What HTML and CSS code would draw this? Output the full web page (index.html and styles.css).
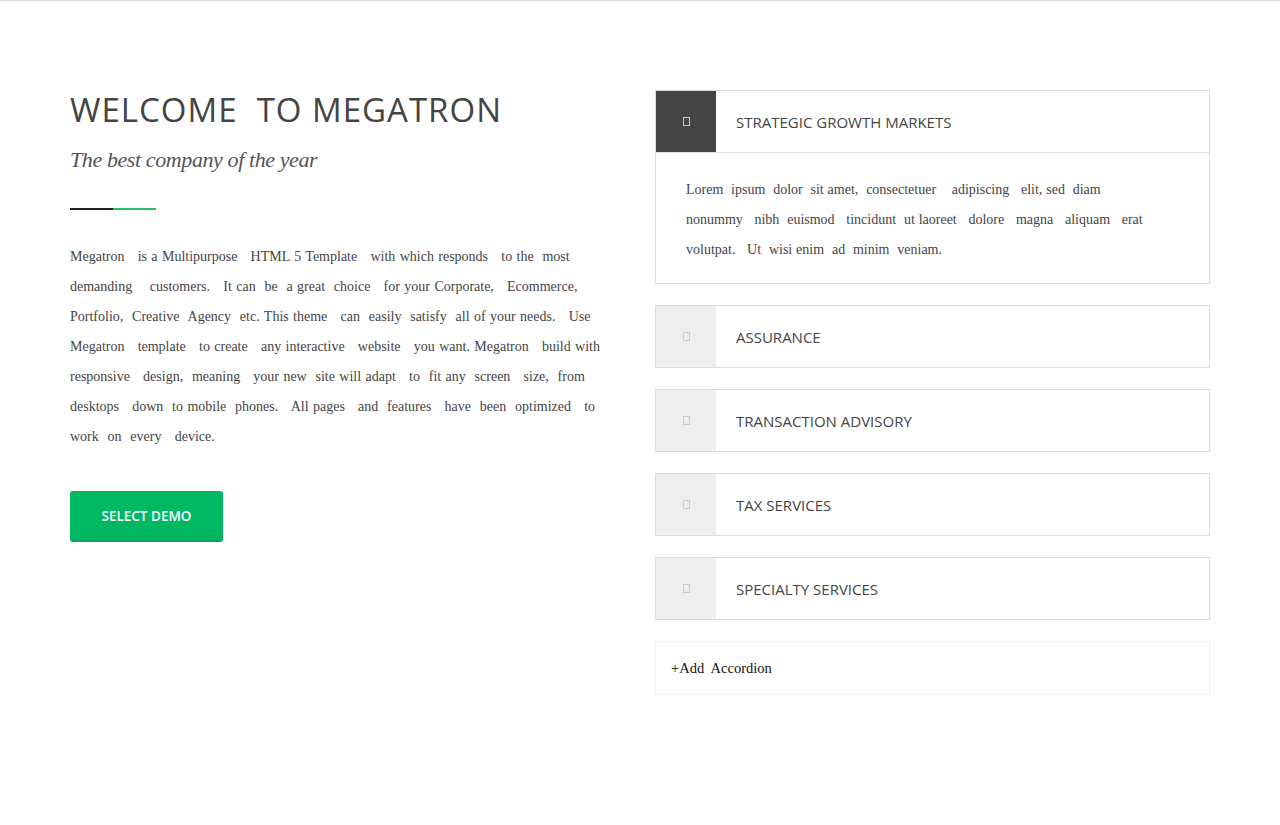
FILE: index.html
```html
<!DOCTYPE html>
<html>
<head>
<meta charset="utf-8">
<link rel="stylesheet" href="styles.css">
</head>
<body>
<div class="page">
  <div class="container">
    <div class="left">
      <h1 class="title">WELCOME&nbsp; TO MEGATRON</h1>
      <p class="subtitle">The best company of the year</p>
      <div class="divider"><span class="d-dark"></span><span class="d-green"></span></div>
      <p class="intro">Megatron&nbsp;&nbsp; is a Multipurpose&nbsp;&nbsp; HTML 5 Template&nbsp;&nbsp; with which responds&nbsp;&nbsp; to the&nbsp; most<br>demanding&nbsp;&nbsp;&nbsp; customers.&nbsp;&nbsp; It can&nbsp; be&nbsp; a great&nbsp; choice&nbsp;&nbsp; for your Corporate,&nbsp;&nbsp; Ecommerce,<br>Portfolio,&nbsp; Creative&nbsp; Agency&nbsp; etc. This theme&nbsp;&nbsp; can&nbsp; easily&nbsp; satisfy&nbsp; all of your needs.&nbsp;&nbsp; Use<br>Megatron&nbsp;&nbsp; template&nbsp;&nbsp; to create&nbsp;&nbsp; any interactive&nbsp;&nbsp; website&nbsp;&nbsp; you want. Megatron&nbsp;&nbsp; build with<br>responsive&nbsp;&nbsp; design,&nbsp; meaning&nbsp;&nbsp; your new&nbsp; site will adapt&nbsp;&nbsp; to&nbsp; fit any&nbsp; screen&nbsp;&nbsp; size,&nbsp; from<br>desktops&nbsp;&nbsp; down&nbsp; to mobile&nbsp; phones.&nbsp;&nbsp; All pages&nbsp;&nbsp; and&nbsp; features&nbsp;&nbsp; have&nbsp; been&nbsp; optimized&nbsp;&nbsp; to<br>work&nbsp; on&nbsp; every&nbsp;&nbsp; device.</p>
      <a class="btn" href="#">SELECT DEMO</a>
    </div>
    <div class="right">
      <div class="acc acc-open">
        <div class="acc-head">
          <div class="acc-icon dark"><span class="tofu"></span></div>
          <div class="acc-title">STRATEGIC GROWTH MARKETS</div>
        </div>
        <div class="acc-body">Lorem&nbsp; ipsum&nbsp; dolor&nbsp; sit amet,&nbsp; consectetuer&nbsp;&nbsp;&nbsp; adipiscing&nbsp;&nbsp; elit, sed&nbsp; diam<br>nonummy&nbsp;&nbsp; nibh&nbsp; euismod&nbsp;&nbsp; tincidunt&nbsp; ut laoreet&nbsp;&nbsp; dolore&nbsp;&nbsp; magna&nbsp;&nbsp; aliquam&nbsp;&nbsp; erat<br>volutpat.&nbsp;&nbsp; Ut&nbsp; wisi enim&nbsp; ad&nbsp; minim&nbsp; veniam.</div>
      </div>
      <div class="acc">
        <div class="acc-head">
          <div class="acc-icon"><span class="tofu"></span></div>
          <div class="acc-title">ASSURANCE</div>
        </div>
      </div>
      <div class="acc">
        <div class="acc-head">
          <div class="acc-icon"><span class="tofu"></span></div>
          <div class="acc-title">TRANSACTION ADVISORY</div>
        </div>
      </div>
      <div class="acc">
        <div class="acc-head">
          <div class="acc-icon"><span class="tofu"></span></div>
          <div class="acc-title">TAX SERVICES</div>
        </div>
      </div>
      <div class="acc">
        <div class="acc-head">
          <div class="acc-icon"><span class="tofu"></span></div>
          <div class="acc-title">SPECIALTY SERVICES</div>
        </div>
      </div>
      <div class="add">+Add&nbsp; Accordion</div>
    </div>
  </div>
</div>
</body>
</html>
```
FILE: styles.css
```css
* { box-sizing: border-box; }
html, body { margin: 0; padding: 0; background: #fff; }
body { border-top: 1px solid #d6d6d6; }
.page { padding-top: 89px; }
.container {
  width: 1140px;
  margin: 0 auto;
  display: grid;
  grid-template-columns: 585px 555px;
}
.left { padding-right: 20px; }
.title {
  margin: 0;
  font-family: "Open Sans", "Liberation Sans", sans-serif;
  font-weight: 400;
  font-size: 33px;
  line-height: 40px;
  letter-spacing: 1px;
  color: #444;
}
.subtitle {
  margin: 16px 0 0;
  font-family: "Liberation Serif", serif;
  font-style: italic;
  font-size: 22px;
  line-height: 28px;
  letter-spacing: -0.4px;
  color: #555;
}
.divider { display: flex; margin-top: 34px; height: 2px; }
.d-dark { width: 43px; background: #222; }
.d-green { width: 43px; background: #2bbd6e; }
.intro {
  margin: 32px 0 0;
  white-space: nowrap;
  font-family: "Liberation Serif", serif;
  font-size: 14px;
  line-height: 30px;
  word-spacing: 0.9px;
  color: #444;
}
.btn {
  display: inline-flex;
  align-items: center;
  justify-content: center;
  margin-top: 39px;
  width: 153px;
  height: 51px;
  background: #00b862;
  border-bottom: 2px solid #08a457;
  border-radius: 3px;
  color: #fff;
  text-decoration: none;
  font-family: "Open Sans", "Liberation Sans", sans-serif;
  font-weight: 600;
  font-size: 13.5px;
}
.right { display: flex; flex-direction: column; gap: 21px; }
.acc { border: 1px solid #ddd; }
.acc-head { display: flex; height: 61px; align-items: stretch; }
.acc-open .acc-head { border-bottom: 1px solid #ddd; height: 62px; }
.acc-icon {
  width: 60px;
  background: #eee;
  display: flex;
  align-items: center;
  justify-content: center;
}
.acc-icon.dark { background: #444; }
.tofu {
  display: block;
  width: 7px;
  height: 9px;
  border: 1px solid #ccc;
}
.acc-title {
  display: flex;
  align-items: center;
  padding-left: 20px;
  font-family: "Open Sans", "Liberation Sans", sans-serif;
  font-size: 15px;
  color: #444;
}
.acc-body {
  padding: 22px 30px 18px 30px;
  white-space: nowrap;
  font-family: "Liberation Serif", serif;
  font-size: 14px;
  line-height: 30px;
  word-spacing: 0.4px;
  color: #444;
}
.add {
  border: 1px solid #eee;
  height: 54px;
  display: flex;
  align-items: center;
  padding-left: 15px;
  font-family: "Liberation Serif", serif;
  font-size: 14.5px;
  color: #111;
}
```
